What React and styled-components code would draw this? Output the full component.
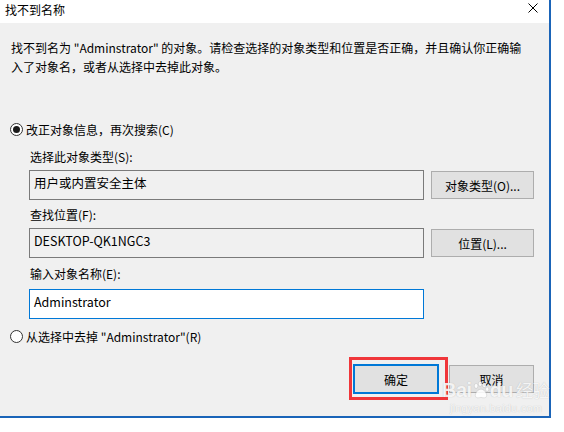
import React from 'react';
import styled, { createGlobalStyle } from 'styled-components';

const GlobalStyle = createGlobalStyle`
  html, body {
    margin: 0;
    padding: 0;
    background: #ffffff;
  }
  body {
    width: 564px;
    height: 432px;
    overflow: hidden;
    font-family: "Noto Sans CJK SC", "Noto Sans", sans-serif;
    font-size: 12px;
    color: #000;
  }
`;

// Dialog frame
const Dialog = styled.div`
  position: relative;
  width: 551px;
  height: 418px;
  box-sizing: border-box;
  background: #f0f0f0;
  border-right: 2px solid #1a64b8;
  border-bottom: 2px solid #1a64b8;
  display: flex;
  flex-direction: column;
`;

const TitleBar = styled.div`
  height: 23px;
  background: #fff;
  display: flex;
  align-items: center;
  justify-content: space-between;
  padding: 0 11px 0 5px;
  flex-shrink: 0;
`;

const TitleText = styled.span`
  font-size: 12px;
  line-height: 1;
  margin-top: -4px;
`;

const CloseIcon = styled.svg`
  width: 10px;
  height: 10px;
  margin-top: -7px;
`;

const Body = styled.div`
  flex: 1;
  display: flex;
  flex-direction: column;
  padding: 15px 15px 0 10px;
`;

const Message = styled.p`
  margin: 0 0 0 1px;
  line-height: 19px;
  white-space: nowrap;
`;

const RadioRow = styled.label`
  display: flex;
  align-items: center;
  gap: 3px;
  height: 16px;
  margin-top: ${(p) => p.$top}px;
`;

const RadioCircle = styled.span`
  width: 11px;
  height: 11px;
  border: 1px solid #333;
  border-radius: 50%;
  background: #fff;
  display: flex;
  align-items: center;
  justify-content: center;

  &::after {
    content: '';
    width: 7px;
    height: 7px;
    border-radius: 50%;
    background: ${(p) => (p.$checked ? '#1a1a1a' : 'transparent')};
  }
`;

const Group = styled.div`
  display: flex;
  flex-direction: column;
  margin-left: 19px;
`;

const FieldLabel = styled.div`
  height: 16px;
  line-height: 16px;
  margin: ${(p) => p.$top}px 0 0 1px;
`;

const FieldRow = styled.div`
  display: flex;
  align-items: center;
  gap: 7px;
  margin-top: ${(p) => p.$top}px;
`;

const TextBox = styled.div`
  width: 395px;
  height: 30px;
  box-sizing: border-box;
  border: 1px solid ${(p) => (p.$active ? '#0078d7' : '#7a7a7a')};
  background: ${(p) => (p.$active ? '#fff' : '#f0f0f0')};
  padding: 2px 4px 0;
  line-height: 20px;
  font-size: 12.5px;
`;

const Button = styled.button`
  width: ${(p) => p.$w || 103}px;
  height: ${(p) => p.$h || 28}px;
  box-sizing: border-box;
  background: #e1e1e1;
  border: ${(p) => (p.$default ? '2px solid #0078d7' : '1px solid #adadad')};
  font-family: inherit;
  font-size: 12px;
  color: #000;
  padding: 0;
  margin: 0;
`;

const Footer = styled.div`
  display: flex;
  justify-content: flex-end;
  align-items: flex-start;
  margin-top: 13px;
  gap: 1px;
`;

const Highlight = styled.div`
  border: 3px solid #f0363a;
  padding: 4px 6px 3px 1px;
  display: flex;
`;

const CancelWrap = styled.div`
  padding-top: 8px;
`;

// Baidu jingyan watermark, sits over the buttons
const Watermark = styled.div`
  position: absolute;
  left: 442px;
  top: 378px;
  width: 104px;
  white-space: nowrap;
  color: rgba(255, 255, 255, 0.85);
  font-family: "Liberation Sans", sans-serif;
  pointer-events: none;
  display: flex;
  flex-direction: column;
  align-items: flex-start;
`;

const MarkTop = styled.div`
  display: flex;
  align-items: center;
  font-size: 20px;
  font-weight: bold;
  line-height: 24px;
  letter-spacing: -0.5px;
  text-shadow: 0 0 1px rgba(120, 120, 120, 0.45);
`;

const MarkCn = styled.span`
  font-family: "Noto Sans CJK SC", sans-serif;
  font-size: 17px;
  font-weight: normal;
  margin-left: 3px;
`;

const MarkUrl = styled.div`
  font-size: 11px;
  line-height: 13px;
  margin-left: 8px;
  letter-spacing: 0.2px;
  text-shadow: 0 0 1px rgba(120, 120, 120, 0.45);
`;

export default function App() {
  return (
    <>
      <GlobalStyle />
      <Dialog>
        <TitleBar>
          <TitleText>找不到名称</TitleText>
          <CloseIcon viewBox="0 0 10 10">
            <path d="M0.5 0.5 L9.5 9.5 M9.5 0.5 L0.5 9.5" stroke="#000" strokeWidth="1" />
          </CloseIcon>
        </TitleBar>

        <Body>
          <Message>
            找不到名为 "Adminstrator" 的对象。请检查选择的对象类型和位置是否正确，并且确认你正确输
            <br />
            入了对象名，或者从选择中去掉此对象。
          </Message>

          <RadioRow $top={45}>
            <RadioCircle $checked />
            改正对象信息，再次搜索(C)
          </RadioRow>

          <Group>
            <FieldLabel $top={12}>选择此对象类型(S):</FieldLabel>
            <FieldRow $top={5}>
              <TextBox>用户或内置安全主体</TextBox>
              <Button>对象类型(O)...</Button>
            </FieldRow>

            <FieldLabel $top={7}>查找位置(F):</FieldLabel>
            <FieldRow $top={5}>
              <TextBox>DESKTOP-QK1NGC3</TextBox>
              <Button>位置(L)...</Button>
            </FieldRow>

            <FieldLabel $top={8}>输入对象名称(E):</FieldLabel>
            <FieldRow $top={7}>
              <TextBox $active>Adminstrator</TextBox>
            </FieldRow>
          </Group>

          <RadioRow $top={9}>
            <RadioCircle />
            从选择中去掉 "Adminstrator"(R)
          </RadioRow>

          <Footer>
            <Highlight>
              <Button $default $w={86} $h={30}>确定</Button>
            </Highlight>
            <CancelWrap>
              <Button $w={85} $h={28}>取消</Button>
            </CancelWrap>
          </Footer>
        </Body>

        <Watermark>
          <MarkTop>
            Bai
            <svg width="18" height="18" viewBox="0 0 22 22">
              <g fill="rgba(255,255,255,0.85)" stroke="rgba(120,120,120,0.35)" strokeWidth="0.6">
                <ellipse cx="5" cy="6" rx="2.2" ry="3" />
                <ellipse cx="10" cy="3.5" rx="2.2" ry="3" />
                <ellipse cx="15" cy="5" rx="2.2" ry="3" />
                <ellipse cx="18.5" cy="10" rx="2" ry="2.6" />
                <path d="M11 10 C7 10 4 15 4 18 C4 21 8 21 11 20 C14 21 18 21 18 18 C18 15 15 10 11 10 Z" />
              </g>
            </svg>
            du
            <MarkCn>经验</MarkCn>
          </MarkTop>
          <MarkUrl>jingyan.baidu.com</MarkUrl>
        </Watermark>
      </Dialog>
    </>
  );
}
